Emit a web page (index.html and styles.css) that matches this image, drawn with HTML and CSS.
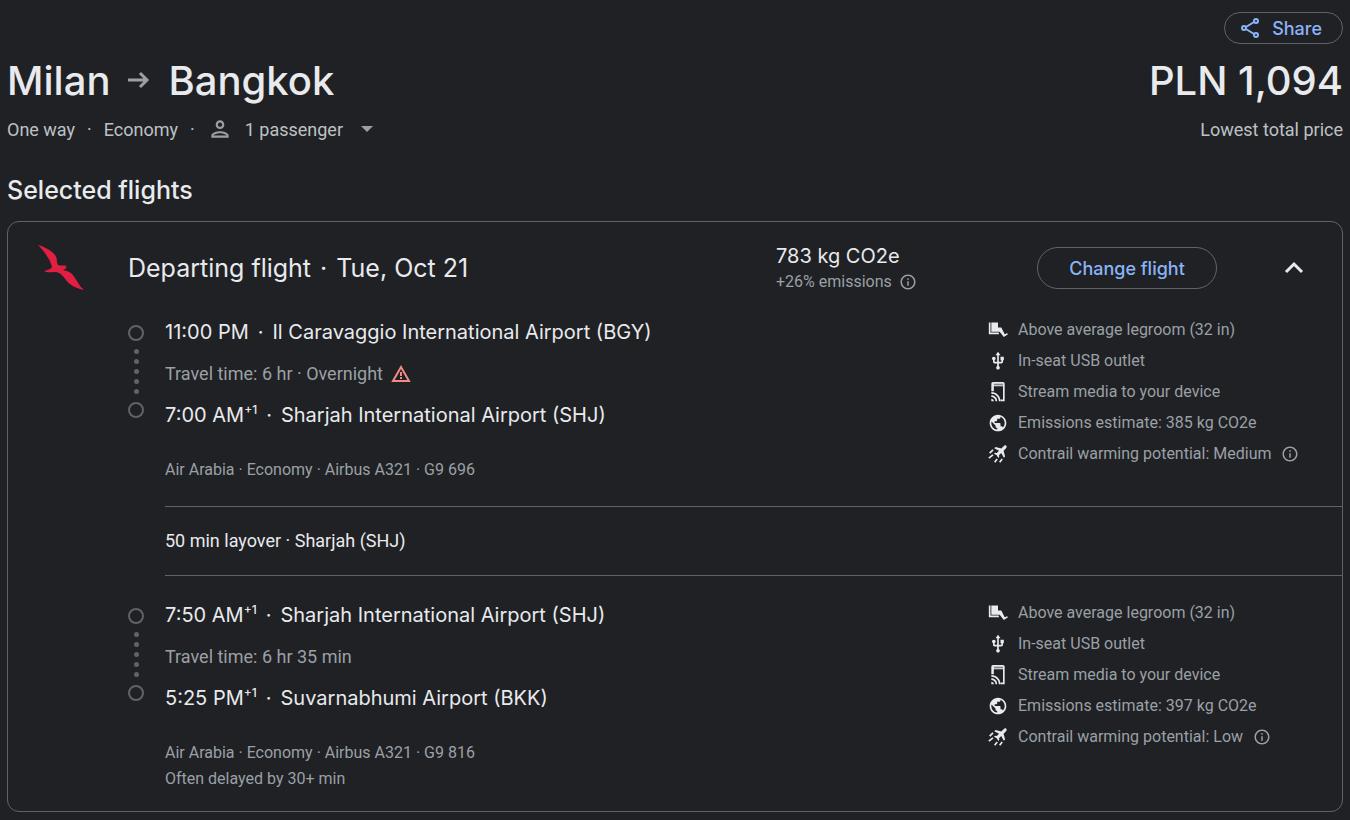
FILE: index.html
```
<!DOCTYPE html>
<html lang="en">
  <head>
    <meta charset="UTF-8" />
    <meta name="viewport" content="width=device-width, initial-scale=1.0" />
    <title>Milan to Bangkok</title>
    <link rel="stylesheet" href="styles.css">
  </head>
  <body>
    <!-- Shared icons -->
    <svg class="sprite" aria-hidden="true">
      <symbol id="info" viewBox="0 0 24 24">
        <path d="M11 7h2v2h-2zm0 4h2v6h-2zm1-9C6.480 2 2 6.480 2 12s4.480 10 10 10 10-4.480 10-10S17.520 2 12 2zm0 18c-4.410 0-8-3.590-8-8s3.590-8 8-8 8 3.590 8 8-3.590 8-8 8z" />
      </symbol>
      <symbol id="legroom" viewBox="0 0 24 24">
        <path d="M1 3h2v12h10v2H1z" />
        <path d="M4 3h8v6h4l4 8 3-1 1 1-5 3.500-5-6.500H4z" />
      </symbol>
      <symbol id="usb" viewBox="0 0 24 24">
        <path d="M15 7v4h1v2h-3V5h2l-3-4-3 4h2v8H8v-2.070c.7-.37 1.200-1.080 1.200-1.930 0-1.210-.99-2.200-2.200-2.200-1.210 0-2.200.99-2.200 2.200 0 .85.5 1.560 1.200 1.930V13c0 1.110.89 2 2 2h3v3.050c-.71.37-1.200 1.100-1.200 1.950 0 1.220.99 2.200 2.200 2.200 1.210 0 2.200-.98 2.200-2.200 0-.85-.49-1.580-1.200-1.950V15h3c1.110 0 2-.89 2-2v-2h1V7h-4z" />
      </symbol>
      <symbol id="stream" viewBox="0 0 24 24">
        <path d="M6 0h12c1 0 2 1 2 2v21h-5v-2h3V5H7v6H4V2c0-1 1-2 2-2z" />
        <path d="M7 2h11v2H7z" fill="#808387" />
        <path d="M4 20v3h3c0-1.660-1.340-3-3-3zm0-4v2c2.760 0 5 2.240 5 5h2c0-3.870-3.130-7-7-7zm0-4v2c4.970 0 9 4.030 9 9h2c0-6.080-4.920-11-11-11z" />
      </symbol>
      <symbol id="globe" viewBox="0 0 24 24">
        <path d="M12 2C6.480 2 2 6.480 2 12s4.480 10 10 10 10-4.480 10-10S17.520 2 12 2zm-1 17.930c-3.950-.49-7-3.850-7-7.930 0-.62.08-1.210.21-1.790L9 15v1c0 1.100.9 2 2 2v1.930zm6.900-2.540c-.26-.81-1-1.390-1.900-1.390h-1v-3c0-.55-.45-1-1-1H8v-2h2c.55 0 1-.45 1-1V7h2c1.100 0 2-.9 2-2v-.41c2.930 1.190 5 4.060 5 7.410 0 2.080-.8 3.970-2.100 5.390z" />
      </symbol>
      <symbol id="contrail" viewBox="0 0 24 24">
        <path d="M22 2c-1-.8-2.400-.3-3.300.6l-2.700 2.700-7-1.800L7.500 5l5.700 3.100-2.700 2.700-2.200-.3-1.100 1.100 3.300 1.900 1.900 3.300 1.100-1.100-.3-2.200 2.700-2.700 3.100 5.700 1.500-1.500-1.800-7 2.700-2.700c.9-.9 1.400-2.300.6-3.300z" />
        <path d="M2 11l4-4M1 17l5-4M8 22l3-4M14 22l3-4" fill="none" stroke="currentColor" stroke-width="2" />
      </symbol>
    </svg>

    <header class="trip">
      <div class="share-row">
        <button class="pill share" type="button">
          <svg width="19" height="20" viewBox="0 0 19 20" fill="none" stroke="currentColor" stroke-width="2" aria-hidden="true">
            <circle cx="3" cy="10" r="2" />
            <circle cx="15" cy="3" r="2" />
            <circle cx="15" cy="17" r="2" />
            <path d="M5 9l8-5M5 11l8 5" />
          </svg>
          Share
        </button>
      </div>
      <div class="title-row">
        <h1>
          <span>Milan</span>
          <svg class="muted" width="22" height="18" viewBox="0 0 22 18" fill="none" stroke="currentColor" stroke-width="3" role="img" aria-label="to">
            <path d="M0 9h20M12 2l7 7-7 7" />
          </svg>
          <span>Bangkok</span>
        </h1>
        <div class="price">PLN 1,094</div>
      </div>
      <div class="sub-row">
        <div class="trip-info">
          <span>One way</span>
          <span>·</span>
          <span>Economy</span>
          <span>·</span>
          <button class="passengers" type="button">
            <svg class="muted" width="26" height="26" viewBox="0 0 24 24" fill="currentColor" aria-hidden="true">
              <path d="M12 6c1.100 0 2 .9 2 2s-.9 2-2 2-2-.9-2-2 .9-2 2-2m0 10c2.700 0 5.800 1.290 6 2H6c.23-.72 3.310-2 6-2m0-12C9.790 4 8 5.790 8 8s1.790 4 4 4 4-1.790 4-4-1.790-4-4-4zm0 10c-2.670 0-8 1.340-8 4v2h16v-2c0-2.660-5.330-4-8-4z" />
            </svg>
            <span>1 passenger</span>
            <svg class="muted" width="24" height="24" viewBox="0 0 24 24" fill="currentColor" aria-hidden="true">
              <path d="M6 9l6 6 6-6z" />
            </svg>
          </button>
        </div>
        <div>Lowest total price</div>
      </div>
    </header>

    <main>
      <h2>Selected flights</h2>
      <section class="card">
        <div class="card-header">
          <svg class="logo" width="48" height="48" viewBox="0 0 48 48" role="img" aria-label="Air Arabia">
            <path fill="#e01f42" d="M1 1C8 3 15 7 18 11c3 4 1 7 3 10 2 1 6 0 9 1l-2 1 2 1c-2 1-3 1-4 2 6 1 9 3 12 8 3 4 5 9 9 12-9-2-14-5-18-10-3-4-6-8-11-8-4 0-8 1-11-1 3-1 6-1 8-4C13 15 7 7 1 1z" />
          </svg>
          <h3><span>Departing flight</span><span>·</span><span>Tue, Oct 21</span></h3>
          <div class="emissions">
            <div class="co2">783 kg CO2e</div>
            <div class="compare">
              +26% emissions
              <svg width="18" height="18" fill="currentColor" aria-hidden="true"><use href="#info" /></svg>
            </div>
          </div>
          <button class="pill change" type="button">Change flight</button>
          <button class="collapse" type="button" aria-label="Collapse">
            <svg width="24" height="24" viewBox="0 0 24 24" fill="none" stroke="currentColor" stroke-width="3" aria-hidden="true">
              <path d="M4 16l8-8 8 8" />
            </svg>
          </button>
        </div>

        <article class="leg">
          <div class="timeline">
            <i class="stop"></i>
            <i class="point"></i><i class="point"></i><i class="point"></i><i class="point"></i><i class="point"></i>
            <i class="stop"></i>
          </div>
          <div class="details">
            <div class="airport"><span>11:00 PM</span><span>·</span><span>Il Caravaggio International Airport (BGY)</span></div>
            <div class="travel">
              Travel time: 6 hr · Overnight
              <svg width="20" height="20" viewBox="0 0 20 20" fill="none" stroke="#f28b82" stroke-width="2" role="img" aria-label="Warning">
                <path d="M10 3L18 17H2z" />
                <path d="M10 8v4M10 13v2" />
              </svg>
            </div>
            <div class="airport"><span>7:00 AM<sup>+1</sup></span><span>·</span><span>Sharjah International Airport (SHJ)</span></div>
            <div class="meta">Air Arabia · Economy · Airbus A321 · G9 696</div>
          </div>
          <ul class="amenities">
            <li><svg><use href="#legroom" /></svg>Above average legroom (32 in)</li>
            <li><svg><use href="#usb" /></svg>In-seat USB outlet</li>
            <li><svg><use href="#stream" /></svg>Stream media to your device</li>
            <li><svg><use href="#globe" /></svg>Emissions estimate: 385 kg CO2e</li>
            <li><svg><use href="#contrail" /></svg>Contrail warming potential: Medium <svg class="info"><use href="#info" /></svg></li>
          </ul>
        </article>

        <div class="layover">50 min layover · Sharjah (SHJ)</div>

        <article class="leg">
          <div class="timeline">
            <i class="stop"></i>
            <i class="point"></i><i class="point"></i><i class="point"></i><i class="point"></i><i class="point"></i>
            <i class="stop"></i>
          </div>
          <div class="details">
            <div class="airport"><span>7:50 AM<sup>+1</sup></span><span>·</span><span>Sharjah International Airport (SHJ)</span></div>
            <div class="travel">Travel time: 6 hr 35 min</div>
            <div class="airport"><span>5:25 PM<sup>+1</sup></span><span>·</span><span>Suvarnabhumi Airport (BKK)</span></div>
            <div class="meta">Air Arabia · Economy · Airbus A321 · G9 816<br>Often delayed by 30+ min</div>
          </div>
          <ul class="amenities">
            <li><svg><use href="#legroom" /></svg>Above average legroom (32 in)</li>
            <li><svg><use href="#usb" /></svg>In-seat USB outlet</li>
            <li><svg><use href="#stream" /></svg>Stream media to your device</li>
            <li><svg><use href="#globe" /></svg>Emissions estimate: 397 kg CO2e</li>
            <li><svg><use href="#contrail" /></svg>Contrail warming potential: Low <svg class="info"><use href="#info" /></svg></li>
          </ul>
        </article>
      </section>
    </main>
  </body>
</html>
```
FILE: styles.css
```
* {
  box-sizing: border-box;
}

body {
  margin: 0;
  padding: 12px 7px 8px;
  background-color: #202124;
  color: #e8eaed;
  font-family: "Roboto", sans-serif;
  font-size: 18px;
}

h1,
h2,
h3 {
  margin: 0;
  font-weight: 400;
}

h1,
h2,
h3,
.price,
.pill,
.co2,
.airport {
  font-family: "Inter", sans-serif;
}

button {
  padding: 0;
  border: none;
  background: none;
  color: inherit;
  font: inherit;
  cursor: pointer;
}

svg {
  flex: none;
}

.sprite {
  display: none;
}

.muted {
  color: #9aa0a6;
}

.pill {
  display: flex;
  align-items: center;
  justify-content: center;
  border: 1px solid #5f6368;
  border-radius: 24px;
  color: #8ab4f8;
  font-size: 18px;
  font-weight: 500;
}

/* Trip header */
.share-row {
  display: flex;
  justify-content: flex-end;
}

.share {
  gap: 12px;
  height: 32px;
  padding: 0 20px 0 16px;
}

.title-row,
.sub-row {
  display: flex;
  justify-content: space-between;
  align-items: center;
}

.title-row {
  height: 72px;
}

h1 {
  display: flex;
  align-items: center;
  gap: 18px;
  font-size: 40px;
  font-weight: 500;
}

.price {
  font-size: 40px;
  font-weight: 500;
}

.sub-row {
  height: 26px;
  color: #bdc1c6;
}

.trip-info,
.passengers {
  display: flex;
  align-items: center;
}

.trip-info {
  gap: 12px;
}

.passengers {
  gap: 12px;
}

/* Selected flights */
h2 {
  padding: 32px 0 15px;
  font-size: 25px;
  font-weight: 500;
  line-height: 32px;
}

.card {
  border: 1px solid #5f6368;
  border-radius: 12px;
}

.card-header {
  display: grid;
  grid-template-columns: 120px 1fr 261px 180px 125px;
  align-items: center;
  height: 92px;
}

.logo {
  margin-left: 29px;
}

h3 {
  display: flex;
  gap: 9px;
  font-size: 25px;
}

.co2 {
  font-size: 20px;
  line-height: 28px;
}

.compare {
  display: flex;
  align-items: center;
  gap: 7px;
  color: #9aa0a6;
  font-size: 16px;
  line-height: 24px;
}

.change {
  height: 42px;
}

.collapse {
  display: flex;
  justify-self: end;
  margin-right: 36px;
}

.leg {
  display: grid;
  grid-template-columns: 37px 1fr 354px;
  padding-left: 120px;
}

.timeline {
  display: flex;
  flex-direction: column;
  align-items: center;
  gap: 5px;
  width: 16px;
  padding-top: 11px;
}

.stop {
  width: 16px;
  height: 16px;
  border: 2px solid #5f6368;
  border-radius: 50%;
}

.stop:first-child {
  margin-bottom: 3px;
}

.stop:last-child {
  margin-top: 3px;
}

.point {
  width: 5px;
  height: 5px;
  border-radius: 50%;
  background-color: #5f6368;
}

.airport {
  display: flex;
  gap: 9px;
  font-size: 20px;
  line-height: 36px;
}

sup {
  font-size: 12px;
  font-weight: 500;
  line-height: 1;
}

.travel {
  display: flex;
  align-items: center;
  gap: 8px;
  height: 47px;
  color: #9aa0a6;
}

.meta {
  padding: 24px 0 19px;
  color: #9aa0a6;
  font-size: 16px;
  line-height: 26px;
}

.layover {
  margin: 4px 0 21px 157px;
  border-top: 1px solid #5f6368;
  border-bottom: 1px solid #5f6368;
  line-height: 68px;
}

.amenities {
  margin: 0;
  padding: 0;
  list-style: none;
  color: #9aa0a6;
  font-size: 16px;
  line-height: 31px;
}

.amenities li {
  display: flex;
  align-items: center;
  gap: 10px;
}

.amenities svg {
  width: 20px;
  height: 20px;
  color: #e8eaed;
  fill: currentColor;
}

.amenities .info {
  width: 18px;
  height: 18px;
  color: #9aa0a6;
}
```
